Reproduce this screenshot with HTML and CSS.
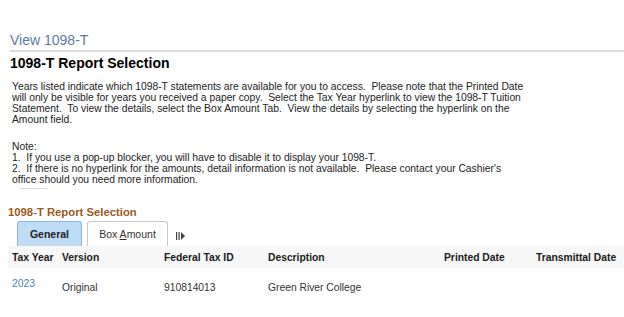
FILE: index.html
```html
<!DOCTYPE html>
<html>
<head>
<meta charset="utf-8">
<link rel="stylesheet" href="styles.css">
</head>
<body>
<div class="page">
  <div class="title">View 1098-T</div>
  <div class="rule"></div>
  <h1 class="heading">1098-T Report Selection</h1>
  <p class="intro">Years listed indicate which 1098-T statements are available for you to access.&nbsp; Please note that the Printed Date<br>will only be visible for years you received a paper copy.&nbsp; Select the Tax Year hyperlink to view the 1098-T Tuition<br>Statement.&nbsp; To view the details, select the Box Amount Tab.&nbsp; View the details by selecting the hyperlink on the<br>Amount field.</p>
  <p class="intro note">Note:<br>1.&nbsp; If you use a pop-up blocker, you will have to disable it to display your 1098-T.<br>2.&nbsp; If there is no hyperlink for the amounts, detail information is not available.&nbsp; Please contact your Cashier's<br>office should you need more information.</p>
  <div class="short-rule"></div>
  <div class="grid-title">1098-T Report Selection</div>
  <div class="tabs">
    <div class="tab active">General</div>
    <div class="tab">Box <u>A</u>mount</div>
    <div class="tab-more">
      <svg width="12" height="10" viewBox="0 0 12 10"><rect x="0" y="1" width="1.2" height="8" fill="#444"/><rect x="2.5" y="1" width="1.2" height="8" fill="#444"/><path d="M5 1 L9 5 L5 9 Z" fill="#444"/></svg>
    </div>
  </div>
  <table class="grid">
    <thead>
      <tr><th class="c1">Tax Year</th><th class="c2">Version</th><th class="c3">Federal Tax ID</th><th class="c4">Description</th><th class="c5">Printed Date</th><th class="c6">Transmittal Date</th></tr>
    </thead>
    <tbody>
      <tr><td class="c1"><a href="#" class="year">2023</a></td><td class="c2 low">Original</td><td class="c3 low">910814013</td><td class="c4 low">Green River College</td><td class="c5"></td><td class="c6"></td></tr>
    </tbody>
  </table>
</div>
</body>
</html>
```
FILE: styles.css
```css
html, body { margin: 0; padding: 0; background: #fff; }
body { font-family: "Liberation Sans", Arial, sans-serif; color: #222; }
.page { padding-top: 32px; }
.title { margin-left: 10px; font-size: 14px; color: #5b7ba6; line-height: 16px; }
.rule { margin: 2px 0 0 10px; height: 2px; background: #dcdcdc; }
.heading { margin: 3px 0 0 10px; font-size: 14px; font-weight: bold; color: #000; line-height: 17px; }
.intro { margin: 9px 0 0 12px; font-size: 10.3px; line-height: 11px; color: #222; }
.note { margin-top: 16px; }
.short-rule { margin: 3px 0 0 20px; width: 27px; height: 1px; background: #d8d8d8; }
.grid-title { margin: 16px 0 0 8px; font-size: 11.3px; font-weight: bold; color: #9c5a1a; line-height: 14px; }
.tabs { display: flex; align-items: flex-end; margin-left: 17px; gap: 5px; height: 27px; }
.tab { height: 25px; box-sizing: border-box; padding: 0 12px; border: 1px solid #c8c8c8; border-bottom: none; border-radius: 3px 3px 0 0; font-size: 10.5px; line-height: 24px; color: #333; background: #fff; }
.tab.active { width: 65px; text-align: center; padding: 0; background: #bfdcf7; border-color: #8ab6e6; font-weight: bold; color: #222; }
.tab:nth-child(2) { width: 81px; text-align: center; padding: 0; }
.tab u { text-decoration: underline; }
.tab-more { align-self: center; margin-top: 6px; margin-left: 3px; line-height: 0; }
.grid { margin-left: 8px; width: 616px; border-collapse: collapse; font-size: 10.3px; }
.grid th { background: #f7f7f7; font-weight: bold; text-align: left; height: 22px; padding: 0; color: #1a1a1a; }
.grid td { padding: 0; height: 38px; vertical-align: top; color: #333; }
.grid .c1 { padding-left: 4px; width: 50px; }
.grid .c2 { width: 102px; }
.grid .c3 { width: 104px; }
.grid .c4 { width: 176px; }
.grid .c5 { width: 92px; }
.year { color: #4a7ec4; text-decoration: none; display: inline-block; margin-top: 10px; }
.low { padding-top: 14px !important; }
```
